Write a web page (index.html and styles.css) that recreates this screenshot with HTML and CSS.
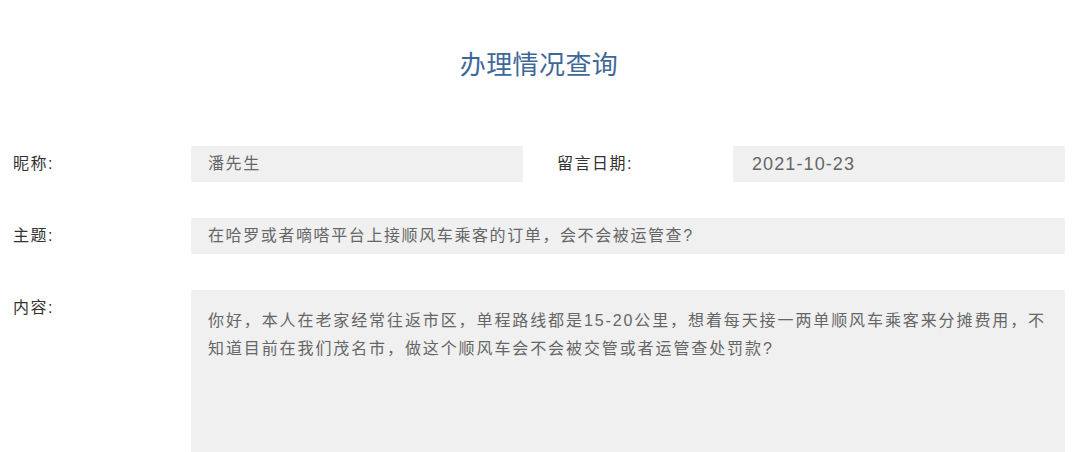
FILE: index.html
```html
<!DOCTYPE html>
<html lang="zh-CN">
<head>
<meta charset="utf-8">
<title>办理情况查询</title>
<link rel="stylesheet" href="styles.css">
</head>
<body>
<div class="page">
  <h1 class="title">办理情况查询</h1>
  <div class="form">
    <div class="row">
      <div class="label">昵称:</div>
      <div class="value value-short">潘先生</div>
      <div class="label label-second">留言日期:</div>
      <div class="value value-date">2021-10-23</div>
    </div>
    <div class="row">
      <div class="label">主题:</div>
      <div class="value value-wide">在哈罗或者嘀嗒平台上接顺风车乘客的订单，会不会被运管查?</div>
    </div>
    <div class="row">
      <div class="label">内容:</div>
      <div class="value value-content">你好，本人在老家经常往返市区，单程路线都是15-20公里，想着每天接一两单顺风车乘客来分摊费用，不知道目前在我们茂名市，做这个顺风车会不会被交管或者运管查处罚款?</div>
    </div>
  </div>
</div>
</body>
</html>
```

FILE: styles.css
```css
html, body {
  margin: 0;
  padding: 0;
  background: #ffffff;
}
body {
  width: 1080px;
  height: 452px;
  overflow: hidden;
  font-family: "Liberation Sans", "Noto Sans CJK SC", sans-serif;
}
.page {
  padding: 0 15px 0 13px;
}
.title {
  margin: 0;
  padding-top: 47px;
  height: 36px;
  line-height: 36px;
  text-align: center;
  font-size: 26px;
  font-weight: normal;
  color: #3f6898;
  letter-spacing: 0.4px;
}
.form {
  display: flex;
  flex-direction: column;
  gap: 36px;
  margin-top: 63px;
}
.row {
  display: flex;
  align-items: flex-start;
}
.label {
  width: 178px;
  flex: none;
  line-height: 36px;
  font-size: 16px;
  letter-spacing: 1.5px;
  color: #333333;
}
.label-second {
  width: 176px;
  margin-left: 34px;
}
.value {
  background: #f0f0f0;
  color: #666666;
  font-size: 16px;
  letter-spacing: 1.6px;
  line-height: 36px;
  height: 36px;
  padding: 0 17px;
  box-sizing: border-box;
}
.value-short {
  width: 332px;
  flex: none;
}
.value-date {
  flex: 1;
  padding-left: 19px;
  font-size: 18px;
  letter-spacing: 1.1px;
}
.value-wide {
  flex: 1;
}
.value-content {
  flex: 1;
  height: 162px;
  line-height: 28px;
  padding: 17px 17px;
  letter-spacing: 1.9px;
}
```
